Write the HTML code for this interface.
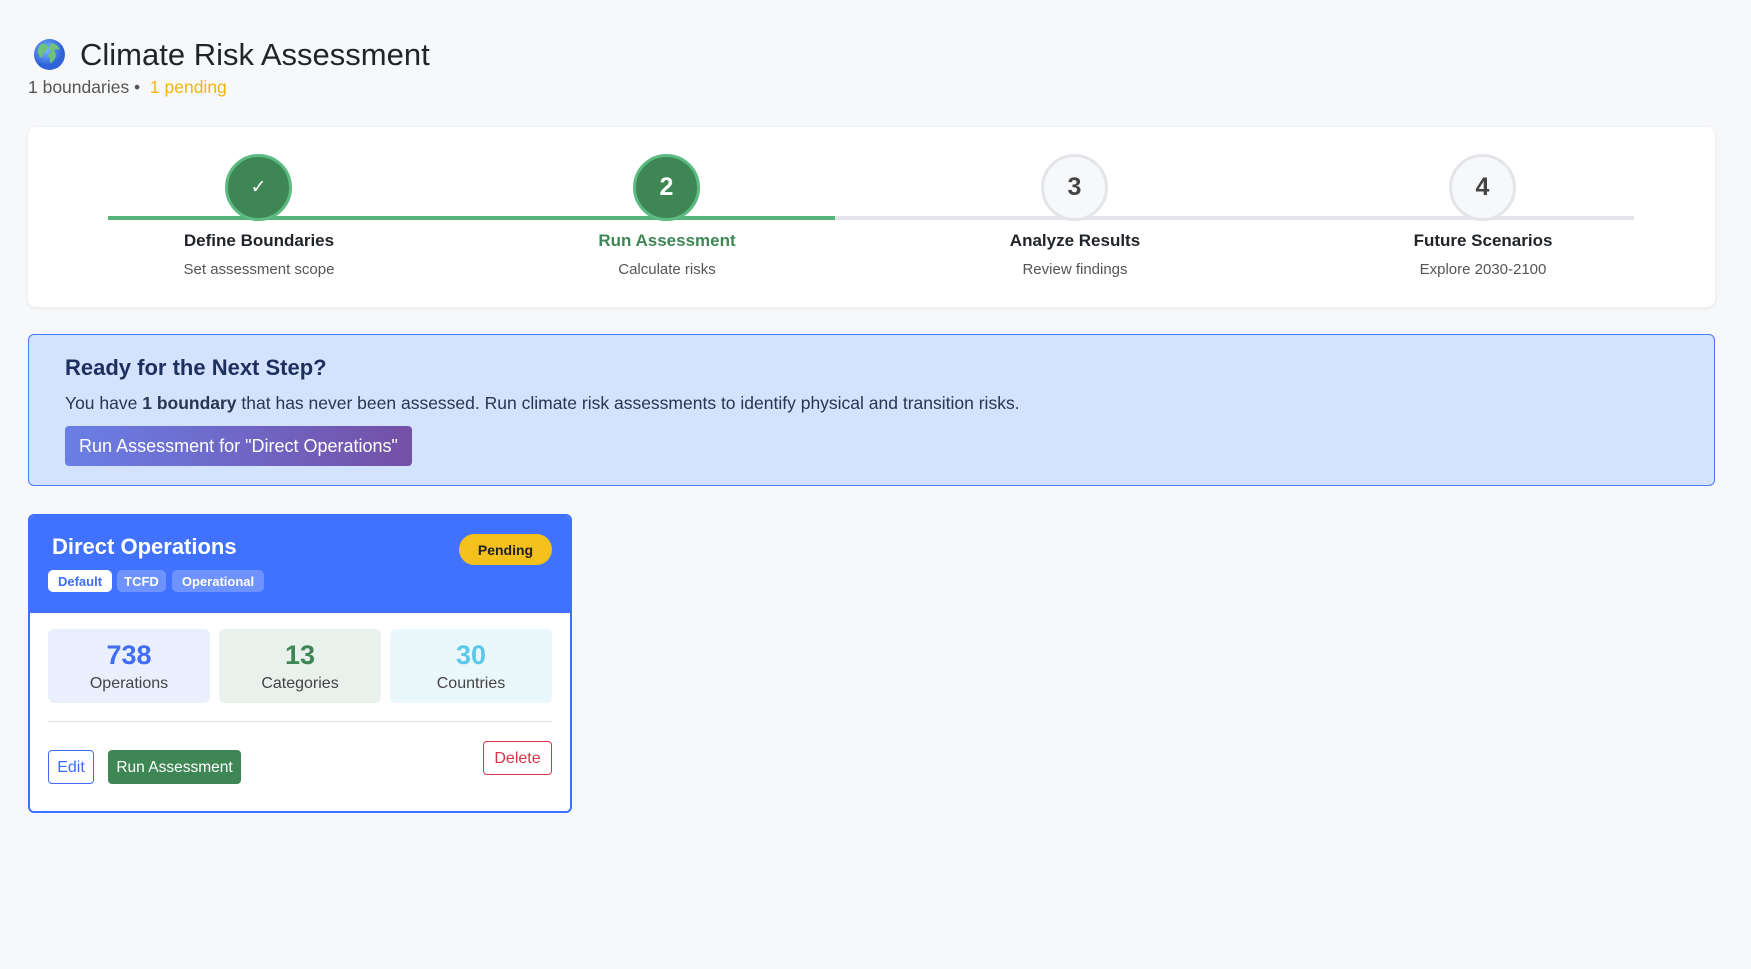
<!DOCTYPE html>
<html><head><meta charset="utf-8"><style>
*{box-sizing:border-box;margin:0;padding:0}
body{width:1751px;height:969px;background:#f7f8fa;font-family:"Liberation Sans",sans-serif;color:#212529;position:relative;overflow:hidden}
.abs{position:absolute}
.title{left:80px;top:37px;font-size:31px;color:#212529;white-space:nowrap}
.sub{left:28px;top:77px;font-size:17.5px;color:#555}
.card{left:28px;top:127px;width:1687px;height:180px;background:#fff;border-radius:8px;box-shadow:0 1px 4px rgba(0,0,0,.08)}
.line{height:4px;top:216px}
.circ{width:67px;height:67px;border-radius:50%;top:154px;display:flex;align-items:center;justify-content:center;font-size:25px;font-weight:bold}
.done{background:#3e8754;border:3px solid #5cbb80;color:#fff}
.todo{background:#f7f8fa;border:3px solid #e4e5e8;color:#444}
.lab{width:300px;text-align:center;font-size:17px;font-weight:bold;top:231px}
.sl{width:300px;text-align:center;font-size:15px;color:#555;top:261px}
.banner{left:28px;top:334px;width:1687px;height:152px;background:#d3e2fd;border:1.5px solid #4a7df5;border-radius:6px}
.btn{border-radius:4px;display:flex;align-items:center;justify-content:center;font-size:16px}
.tag{top:570px;height:22px;border-radius:5px;font-size:13px;font-weight:bold;display:flex;align-items:center;justify-content:center}
.stat{top:629px;width:162px;height:74px;border-radius:6px;text-align:center}
.stat b{display:block;font-size:27px;margin-top:11px}
.stat span{display:block;font-size:16px;color:#444;margin-top:4px}
</style></head><body>
<svg class="abs" style="left:33px;top:38px" width="33" height="33" viewBox="0 0 32 32"><defs><radialGradient id="g" cx="40%" cy="35%"><stop offset="0" stop-color="#7fb8ff"/><stop offset="1" stop-color="#2f64d8"/></radialGradient></defs><circle cx="16" cy="16" r="15" fill="url(#g)"/><path d="M8 6c3-1 6 0 7 3-2 1-1 4-4 5-2 1-1 4-3 5-2-2-4-5-3-8 0-2 2-4 3-5zM18 5c3 0 7 3 8 6-2 1-3-1-5 0-1 2 2 4 1 7-1 3-3 5-5 7-1-3 0-5-2-7-1-2 1-4 3-4-1-2-3-2-2-5 0-2 1-3 2-4z" fill="#6fc27a"/></svg>
<div class="abs title">Climate Risk Assessment</div>
<div class="abs sub">1 boundaries •&nbsp; <span style="color:#f2b50f">1 pending</span></div>
<div class="abs card"></div>
<div class="abs line" style="left:108px;width:727px;background:#58b47a"></div>
<div class="abs line" style="left:835px;width:799px;background:#e4e5e8"></div>
<div class="abs circ done" style="left:225px;font-size:19px;font-weight:normal">✓</div>
<div class="abs circ done" style="left:633px">2</div>
<div class="abs circ todo" style="left:1041px">3</div>
<div class="abs circ todo" style="left:1449px">4</div>
<div class="abs lab" style="left:109px">Define Boundaries</div>
<div class="abs lab" style="left:517px;color:#3e8754">Run Assessment</div>
<div class="abs lab" style="left:925px">Analyze Results</div>
<div class="abs lab" style="left:1333px">Future Scenarios</div>
<div class="abs sl" style="left:109px">Set assessment scope</div>
<div class="abs sl" style="left:517px">Calculate risks</div>
<div class="abs sl" style="left:925px">Review findings</div>
<div class="abs sl" style="left:1333px">Explore 2030-2100</div>
<div class="abs banner"></div>
<div class="abs" style="left:65px;top:355px;font-size:22px;font-weight:bold;color:#1c2f5e">Ready for the Next Step?</div>
<div class="abs" style="left:65px;top:393px;font-size:17.5px;color:#2a3550">You have <b>1 boundary</b> that has never been assessed. Run climate risk assessments to identify physical and transition risks.</div>
<div class="abs btn" style="left:65px;top:426px;width:347px;height:40px;background:linear-gradient(90deg,#6a7fe6,#7450a6);color:#fff;font-size:18px">Run Assessment for "Direct Operations"</div>
<div class="abs" style="left:28px;top:514px;width:544px;height:299px;background:#fff;border:2px solid #3f72ff;border-radius:6px;overflow:hidden">
<div style="height:97px;background:#4072ff"></div></div>
<div class="abs" style="left:52px;top:534px;font-size:22px;font-weight:bold;color:#fff">Direct Operations</div>
<div class="abs btn" style="left:459px;top:534px;width:93px;height:31px;border-radius:16px;background:#f4c01b;font-size:14px;font-weight:bold;color:#222">Pending</div>
<div class="abs tag" style="left:48px;width:64px;background:#fff;color:#3f6df5">Default</div>
<div class="abs tag" style="left:117px;width:49px;background:#6e93ff;color:#fff">TCFD</div>
<div class="abs tag" style="left:172px;width:92px;background:#6e93ff;color:#fff">Operational</div>
<div class="abs stat" style="left:48px;background:#e9effd"><b style="color:#3f6df5">738</b><span>Operations</span></div>
<div class="abs stat" style="left:219px;background:#e8f1ec"><b style="color:#3e8754">13</b><span>Categories</span></div>
<div class="abs stat" style="left:390px;background:#ebf8fb"><b style="color:#5ac8ea">30</b><span>Countries</span></div>
<div class="abs" style="left:48px;top:721px;width:504px;height:1px;background:#e0e0e0"></div>
<div class="abs btn" style="left:48px;top:750px;width:46px;height:34px;border:1px solid #3f6df5;color:#3f6df5;padding-top:2px">Edit</div>
<div class="abs btn" style="left:108px;top:750px;width:133px;height:34px;background:#3e8754;color:#fff;font-size:15.5px;padding-top:2px">Run Assessment</div>
<div class="abs btn" style="left:483px;top:741px;width:69px;height:34px;border:1px solid #d9344a;color:#d9344a;padding-top:2px">Delete</div>
</body></html>
